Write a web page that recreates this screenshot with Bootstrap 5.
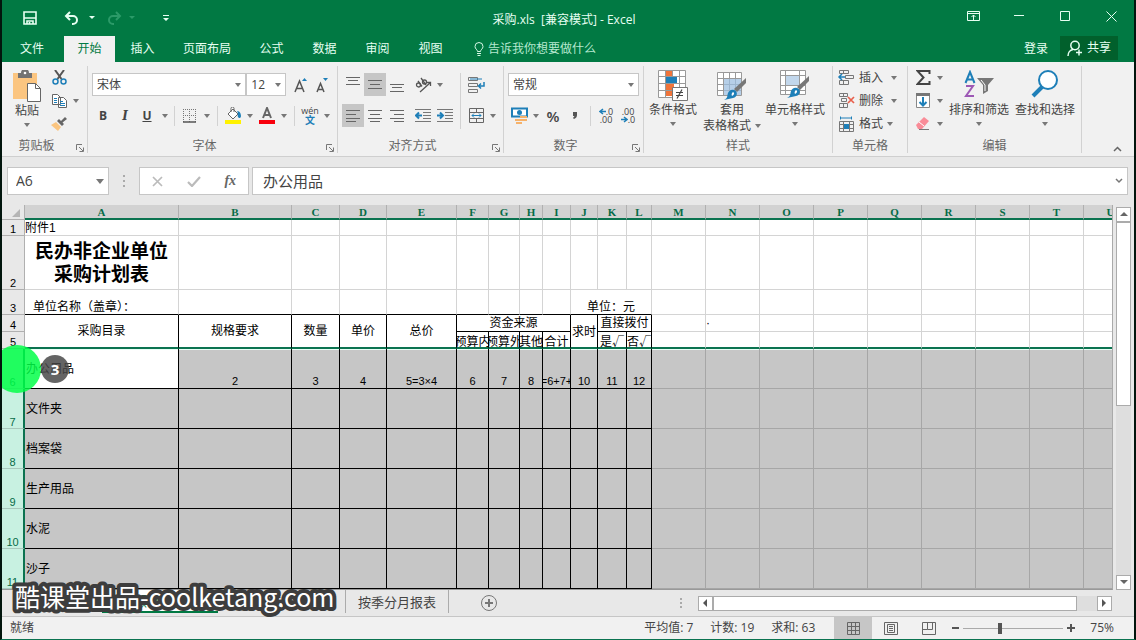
<!DOCTYPE html>
<html lang="zh-CN">
<head>
<meta charset="utf-8">
<meta name="viewport" content="width=device-width, initial-scale=1">
<title>采购.xls [兼容模式] - Excel</title>
<link href="https://cdn.jsdelivr.net/npm/bootstrap@5.3.0/dist/css/bootstrap.min.css" rel="stylesheet">
<style>
:root{--green:#017943;--edge:#0b7350;--ink:#444}
body{font-family:"Open Sans","Noto Sans CJK SC",sans-serif;font-size:12px;line-height:16px;color:var(--ink);background:#e8e8e8}
.app{border-left:2px solid #02150d;border-right:2px solid #02150d;border-bottom:1px solid var(--edge)}
button,input,select{font:inherit;color:inherit}
button{background:none;border:0;padding:0;line-height:16px;white-space:nowrap}
svg{display:block;flex:none}
/* title bar and ribbon tabs */
.topbar{background:var(--green);color:#e6fff2}
.titlerow{height:36px}
.winbtn{width:46px;height:36px}
.qa{width:24px;height:24px}
.tabrow{height:26px;gap:2px}
.rtab{height:26px;min-width:51px;padding:0 13px;color:#e6fff2;text-decoration:none}
.rtab.file{min-width:60px;}
.rtab.on{background:#f1f1f1;color:var(--green)}
.share{height:24px;width:58px;background:#01602c}
/* ribbon */
.ribbon{background:#f1f1f1;border-bottom:1px solid #cfcfcf;height:95px;padding:4px 0}
.grp{border-right:1px solid #d2d2d2;height:87px}
.grp-body{height:72px}
.grp-name{height:15px;color:#666}
.launch{right:3px;bottom:1px}
.tool{width:22px;height:23px}
.tool.on{background:#c6c6c6}
.drop{width:12px;height:20px}
.caret{width:0;height:0;border:3px solid transparent;border-top:4px solid #777;border-bottom:0}
.vsep{width:1px;height:20px;background:#d2d2d2}
.combo{height:23px;border:1px solid #c6c6c6;border-radius:0;padding:0 4px;appearance:none;background:#fff url("data:image/svg+xml,%3Csvg xmlns='http://www.w3.org/2000/svg' width='6' height='4'%3E%3Cpath d='M0 0h6L3 4z' fill='%23777'/%3E%3C/svg%3E") no-repeat right 4px center}
.big{height:68px}
.big svg{margin-bottom:1px}
.w58{width:58px}.w66{width:66px}
.gut{padding:7px 4px 0}
/* formula bar */
.fbar{height:48px;padding:0 6px 0 5px}
.fbox{height:28px;border:1px solid #c6c6c6;background:#fff;border-radius:0}
.namebox{width:102px;font-size:14px}
.fdots{margin:0 14px}
.ftools{width:110px;margin-right:3px}
.fx{font-size:15px;padding:0 4px 0 10px}
/* worksheet */
.sheet{background:#fff;border-bottom:1px solid #999;border-right:1px solid #aaa}
.cells{table-layout:fixed;width:1136px;border-collapse:separate;border-spacing:0;font-family:"Liberation Sans","Noto Sans CJK SC",sans-serif;color:#000;line-height:14px}
.cells td,.cells th{padding:0;border:0 solid #d4d4d4;border-right-width:1px;border-bottom-width:1px;overflow:hidden;white-space:nowrap;font-weight:400}
.cells thead th{height:15px;background:#d2d2d2;border-right-color:#b0b0b0;border-bottom:2px solid var(--edge);color:#066b47;font-family:"Liberation Serif",serif;font-weight:700;font-size:11px;line-height:12px;padding-top:1px;text-align:center}
.cells thead th.corner{background:#e8e8e8;border-right-color:#b0b0b0;border-bottom:1px solid #b0b0b0}
.cells tbody th{background:#e8e8e8;border-color:#b0b0b0;text-align:center;vertical-align:bottom;line-height:12px;font-size:11px}
.cells td{vertical-align:middle}
.cells .k,.sel td:nth-child(-n+13){border-color:#000}
.cells .kb{border-bottom-color:#000}
.cells .edge td,.cells td.edge{border-bottom:2px solid var(--edge)}
.mid{display:flex;justify-content:center;font-family:"Noto Sans CJK SC",sans-serif}
.h15{height:15px;line-height:18px}
.r1{height:16px}.r2{height:54px}.r3{height:25px}.r4{height:17px}.sel,.sel th,.sel td{height:40px}
.sel td{background:#c6c6c6;border-color:#a6a6a6}
.sel td.num{vertical-align:bottom;font-size:11px}
.cells .sel th{background:#c8f1e1;color:#066b47;border-right:2px solid var(--edge);border-bottom-color:#a9c9bd}
.sel td:nth-child(2){padding-left:1px}
.sel td.live{background:#fff}
.sel.top td{box-shadow:inset 0 1px #e8fff6}
.cells td.heading{font-size:19px;line-height:23px;font-weight:700;text-align:center}
.vscroll{width:21px;padding:2px 3px 0 3px}
.sbtn{width:15px;height:15px;border:1px solid #ababab;background:#fff}
.thumb{border:1px solid #ababab;background:#fff}
.grow-a{flex:183 0 0}.grow-b{flex:170 0 0;background:#dedede}
/* sheet tabs and status bar */
.tabsbar{height:27px;border-bottom:1px solid #c6c6c6}
.stab{height:23px;color:var(--ink);text-decoration:none;font-size:13px;padding:0 12px;border-right:1px solid #ababab}
.stab.on{background:#fff;color:var(--green);border-right:0;border-bottom:2px solid var(--green);width:116px}
.stab.wide{width:128px}
.hscroll{width:414px;margin-right:22px}
.status{height:22px;background:#f1f1f1}
.sums{gap:17px;margin-right:19px}
.view{width:38px;height:22px}
.view.on{background:#c6c6c6}
.zoomer{width:100px;height:16px;appearance:none;background:linear-gradient(#aaa,#aaa) center/100% 1px no-repeat}
.zoomer::-webkit-slider-thumb{appearance:none;width:4px;height:11px;background:#555}
.pct{margin:0 20px 0 11px}
/* overlays */
.touch{width:48px;height:48px;left:-9px;top:140px;background:rgba(0,255,70,.84)}
.bubble{width:28px;height:28px;left:39px;top:150px;background:rgba(70,70,70,.84);color:#fff;font-size:15px}
.wm{left:0;bottom:20px}
.wm text{font-family:"Noto Sans CJK SC",sans-serif;font-size:25px;fill:#fff;stroke:#3d3d3d;stroke-width:8px;paint-order:stroke;stroke-linejoin:round}
</style>
</head>
<body>
<div class="app position-relative vh-100 d-flex flex-column overflow-hidden">

<header class="topbar">
  <div class="titlerow d-flex align-items-center">
    <div class="d-flex align-items-center flex-fill" style="flex-basis:0">
      <button class="qa d-flex align-items-center justify-content-center ms-3" aria-label="保存"><svg width="14" height="14" viewBox="0 0 14 14" fill="none" stroke="#e6fff2" stroke-width="1.6"><path d="M1 1h12v12H1zM1 7h12M4 13v-3h6v3"/><path d="M6.500 11v2"/></svg></button>
      <button class="qa d-flex align-items-center justify-content-center ms-3 ps-1" aria-label="撤消"><svg width="16" height="14" viewBox="0 0 16 14" fill="none" stroke="#e6fff2" stroke-width="2"><path d="M6 1L2 5l4 4M2 5h7a4 4 0 0 1 0 8H8"/></svg></button>
      <button class="drop d-flex align-items-center justify-content-center ms-1" aria-label="撤消列表"><svg width="6" height="4"><path d="M0 0h6L3 3z" fill="#e6fff2"/></svg></button>
      <button class="qa d-flex align-items-center justify-content-center ms-1" aria-label="恢复"><svg width="16" height="14" viewBox="0 0 16 14" fill="none" stroke="#2b9a68" stroke-width="2"><path d="M10 1l4 4-4 4M14 5H7a4 4 0 0 0 0 8h1"/></svg></button>
      <button class="drop d-flex align-items-center justify-content-center" aria-label="恢复列表"><svg width="6" height="4"><path d="M0 0h6L3 3z" fill="#2b9a68"/></svg></button>
      <button class="qa d-flex align-items-center justify-content-center ms-3" aria-label="自定义快速访问工具栏"><svg width="6" height="7"><path d="M0 0h6v1H0zM0 3h6L3 6z" fill="#e6fff2"/></svg></button>
    </div>
    <div class="pt-1">采购.xls &nbsp;[兼容模式] - Excel</div>
    <div class="d-flex justify-content-end flex-fill" style="flex-basis:0">
      <button class="winbtn d-flex align-items-center justify-content-center pb-1" aria-label="功能区显示选项"><svg width="13" height="10" viewBox="0 0 13 10" fill="none" stroke="#e6fff2"><path d="M.5.5h12v9H.5zM.5 2.500h12M6.500 9V4M4.500 6l2-2 2 2"/></svg></button>
      <button class="winbtn d-flex align-items-center justify-content-center pb-1" aria-label="最小化"><svg width="10" height="2"><path d="M0 .5h10" stroke="#e6fff2"/></svg></button>
      <button class="winbtn d-flex align-items-center justify-content-center pb-1" aria-label="最大化"><svg width="10" height="10"><path d="M.5.5h9v9h-9z" fill="none" stroke="#e6fff2"/></svg></button>
      <button class="winbtn d-flex align-items-center justify-content-center pb-1" aria-label="关闭"><svg width="11" height="11"><path d="M.5.5l10 10M10.500.5l-10 10" stroke="#e6fff2"/></svg></button>
    </div>
  </div>
  <nav class="tabrow d-flex">
    <a href="#" class="rtab file d-flex align-items-center justify-content-center">文件</a>
    <a href="#" class="rtab on d-flex align-items-center justify-content-center">开始</a>
    <a href="#" class="rtab d-flex align-items-center justify-content-center">插入</a>
    <a href="#" class="rtab d-flex align-items-center justify-content-center">页面布局</a>
    <a href="#" class="rtab d-flex align-items-center justify-content-center">公式</a>
    <a href="#" class="rtab d-flex align-items-center justify-content-center">数据</a>
    <a href="#" class="rtab d-flex align-items-center justify-content-center">审阅</a>
    <a href="#" class="rtab d-flex align-items-center justify-content-center">视图</a>
    <button class="d-flex align-items-center gap-1 ms-3" style="color:#b5e8cf"><svg width="10" height="14" viewBox="0 0 10 14" fill="none" stroke="#d6f8e6"><path d="M3.500 9.500C3.500 7.500 1 7 1 4.500a4 4 0 0 1 8 0c0 2.500-2.500 3-2.500 5zM3 11.500h4M3.500 13.500h3"/></svg><span>告诉我你想要做什么</span></button>
    <div class="ms-auto d-flex me-3">
      <button class="me-2 pe-1">登录</button>
      <button class="share d-flex align-items-center justify-content-center gap-1"><svg width="16" height="17" viewBox="0 0 16 17" fill="none" stroke="#e6fff2" stroke-width="1.500"><circle cx="8" cy="5.500" r="4.200"/><path d="M1 16c0-3 2-6 5-6.500M9 12.500h6M12 9.500v6"/></svg><span>共享</span></button>
    </div>
  </nav>
</header>

<div class="ribbon d-flex">
  <section class="grp position-relative flex-shrink-0" style="width:86px">
    <div class="grp-body d-flex ps-1">
      <button class="big mt-1 d-flex flex-column align-items-center" style="width:42px"><svg width="30" height="32" viewBox="0 0 30 32"><path d="M1 3h24v26H1z" fill="#fbc580"/><path d="M6 3h3a4 4 0 0 1 8 0h3v5H6z" fill="#737373"/><circle cx="13" cy="3" r="1.300" fill="#fff"/><path d="M15.500 13.500h8l5 5v13h-13z" fill="#fff" stroke="#666"/><path d="M23.500 13.500v5h5" fill="none" stroke="#666"/></svg><span>粘贴</span><i class="caret mt-1"></i></button>
      <div class="d-flex flex-column">
        <button class="tool d-flex align-items-center justify-content-center" aria-label="剪切"><svg width="15" height="15" viewBox="0 0 15 15" fill="none"><path d="M3 0l6.500 9M12 0L5.500 9" stroke="#555" stroke-width="2"/><circle cx="3.500" cy="11.500" r="2.500" stroke="#1e7fb8" stroke-width="1.500"/><circle cx="11.500" cy="11.500" r="2.500" stroke="#1e7fb8" stroke-width="1.500"/></svg></button>
        <div class="d-flex align-items-center"><button class="tool d-flex align-items-center justify-content-center" aria-label="复制"><svg width="15" height="14" viewBox="0 0 15 14"><path d="M.5.5h5l3 3v7h-8zM6.500 3.500h5l3 3v7h-8z" fill="#fff" stroke="#666"/><path d="M2 4.500h3M2 6.500h3M2 8.500h3M8 7.500h3M8 9.500h5M8 11.500h5" stroke="#1e7fb8"/></svg></button><button class="drop d-flex align-items-center justify-content-center" aria-label="复制选项"><i class="caret"></i></button></div>
        <button class="tool d-flex align-items-center justify-content-center" aria-label="格式刷"><svg width="16" height="14" viewBox="0 0 16 14"><path d="M0 8l5-3 5 5-3 4z" fill="#fbc580"/><path d="M6 4l5 5 2-2-1.500-1.500L16 2l-2-2-4 4-2-2z" fill="#666"/></svg></button>
      </div>
    </div>
    <div class="grp-name text-center pe-3">剪贴板</div>
    <button class="launch position-absolute" aria-label="剪贴板设置"><svg width="8" height="8"><path d="M.5 6V.5H6M3 3l4 4M7.500 3.500v4h-4" fill="none" stroke="#777"/></svg></button>
  </section>

  <section class="grp position-relative flex-shrink-0" style="width:250px">
    <div class="grp-body gut">
      <div class="d-flex align-items-center mb-2">
        <select class="combo" style="width:157px" aria-label="字体"><option>宋体</option></select>
        <select class="combo" style="width:40px" aria-label="字号"><option>12</option></select>
        <button class="tool d-flex align-items-center justify-content-center ms-1" aria-label="增大字号"><svg width="14" height="16" viewBox="0 0 14 16"><path d="M1 15L5.500 4 10 15M2.500 11.500h6" fill="none" stroke="#555" stroke-width="1.500"/><path d="M8 4l2.500-3L13 4z" fill="#1e7fb8"/></svg></button>
        <button class="tool d-flex align-items-center justify-content-center" aria-label="减小字号"><svg width="14" height="16" viewBox="0 0 14 16"><path d="M2 15L5.500 6.500 9 15M3 12.500h5" fill="none" stroke="#555" stroke-width="1.500"/><path d="M8 1h5L10.500 4z" fill="#1e7fb8"/></svg></button>
      </div>
      <div class="d-flex align-items-center">
        <button class="tool fw-bold">B</button><button class="tool fst-italic fw-bold" style="font-family:'DejaVu Serif',serif">I</button><button class="tool fw-bold text-decoration-underline">U</button><button class="drop d-flex align-items-center" aria-label="下划线选项"><i class="caret ms-1"></i></button>
        <i class="vsep mx-1"></i>
        <button class="tool d-flex align-items-center justify-content-center" aria-label="边框"><svg width="14" height="14" fill="none" stroke="#777"><path d="M.5 0v13M6.500 0v13M12.500 0v13M0 .5h13M0 6.500h13" stroke-dasharray="1 1"/><path d="M0 13h13" stroke="#555" stroke-width="1.500"/></svg></button><button class="drop d-flex align-items-center justify-content-center" aria-label="边框选项"><i class="caret"></i></button>
        <i class="vsep mx-1"></i>
        <button class="tool d-flex align-items-center justify-content-center" aria-label="填充颜色"><svg width="17" height="17" viewBox="0 0 17 17"><path d="M0 13h16v4H0z" fill="#fff200"/><path d="M3 7l5-5 5 5-5 5zM6 5V1.500a1.500 1.500 0 0 1 3 0V5" fill="#fff" stroke="#666"/><path d="M12 4c3 0 4 3 4 5s-2 3-3 1 1-3-1-6z" fill="#1e7fb8"/></svg></button><button class="drop d-flex align-items-center justify-content-center" aria-label="填充颜色选项"><i class="caret"></i></button>
        <button class="tool d-flex align-items-center justify-content-center" aria-label="字体颜色"><svg width="16" height="17" viewBox="0 0 16 17"><path d="M0 13h16v4H0z" fill="#f8000c"/><path d="M4 11L8 1l4 10M5.500 8h5" fill="none" stroke="#666" stroke-width="2"/></svg></button><button class="drop d-flex align-items-center justify-content-center" aria-label="字体颜色选项"><i class="caret"></i></button>
        <i class="vsep mx-1"></i>
        <button class="tool d-flex flex-column align-items-center justify-content-center" aria-label="拼音指南"><span style="font-size:9px;line-height:8px">wén</span><span style="font-size:10px;line-height:10px;color:#1e7fb8" class="fw-bold">文</span></button><button class="drop d-flex align-items-center justify-content-center" aria-label="拼音选项"><i class="caret"></i></button>
      </div>
    </div>
    <div class="grp-name text-center pe-3">字体</div>
    <button class="launch position-absolute" aria-label="字体设置"><svg width="8" height="8"><path d="M.5 6V.5H6M3 3l4 4M7.500 3.500v4h-4" fill="none" stroke="#777"/></svg></button>
  </section>

  <section class="grp position-relative flex-shrink-0" style="width:166px">
    <div class="grp-body gut d-flex">
      <div>
        <div class="d-flex align-items-center mb-2">
          <button class="tool d-flex justify-content-center pt-1" aria-label="顶端对齐"><svg width="14" height="8" stroke="#666"><path d="M0 .5h14M2 3.500h10M0 7.500h14"/></svg></button>
          <button class="tool on d-flex align-items-center justify-content-center" aria-label="垂直居中"><svg width="14" height="9" stroke="#666"><path d="M0 .5h14M2 4.500h10M0 8.500h14"/></svg></button>
          <button class="tool d-flex align-items-end justify-content-center pb-1" aria-label="底端对齐"><svg width="14" height="8" stroke="#666"><path d="M0 .5h14M2 3.500h10M0 7.500h14"/></svg></button>
          <button class="tool d-flex align-items-center justify-content-center ms-1" aria-label="方向"><svg width="17" height="16" viewBox="0 0 17 16" fill="none" stroke="#555" stroke-width="1.300"><circle cx="3.500" cy="8" r="2"/><path d="M3 4l4 5.500M6 1l5 7"/><circle cx="9.500" cy="5" r="2"/><path d="M5 15L15.500 5.500M12 5.500h3.500V9"/></svg></button><button class="drop d-flex align-items-center justify-content-center" aria-label="方向选项"><i class="caret"></i></button>
        </div>
        <div class="d-flex align-items-center">
          <button class="tool on d-flex align-items-center justify-content-center" aria-label="左对齐"><svg width="14" height="12" stroke="#666"><path d="M0 .5h14M0 4.500h10M0 8.500h14M0 11.500h10"/></svg></button>
          <button class="tool d-flex align-items-center justify-content-center" aria-label="居中"><svg width="14" height="12" stroke="#666"><path d="M0 .5h14M2 4.500h10M0 8.500h14M2 11.500h10"/></svg></button>
          <button class="tool d-flex align-items-center justify-content-center" aria-label="右对齐"><svg width="14" height="12" stroke="#666"><path d="M0 .5h14M4 4.500h10M0 8.500h14M4 11.500h10"/></svg></button>
          <button class="tool d-flex align-items-center justify-content-center ms-1" aria-label="减少缩进"><svg width="16" height="13" fill="none"><path d="M0 .5h16M8 3.500h8M8 6.500h8M8 9.500h8M0 12.500h16" stroke="#777"/><path d="M7 6.500H1M4 3.500l-3 3 3 3" stroke="#1e7fb8" stroke-width="2"/></svg></button>
          <button class="tool d-flex align-items-center justify-content-center" aria-label="增加缩进"><svg width="16" height="13" fill="none"><path d="M0 .5h16M8 3.500h8M8 6.500h8M8 9.500h8M0 12.500h16" stroke="#777"/><path d="M0 6.500h6M3 3.500l3 3-3 3" stroke="#1e7fb8" stroke-width="2"/></svg></button>
        </div>
      </div>
      <i class="vsep mx-1" style="height:56px"></i>
      <div>
        <button class="tool d-flex align-items-center justify-content-center mb-2" aria-label="自动换行"><svg width="17" height="16" viewBox="0 0 17 16" fill="none"><path d="M.5.5h9v3h-9zM.5 6.500h9v3h-9zM.5 12.500h9v3h-9z" stroke="#777"/><path d="M2 2h12" stroke="#1e7fb8"/><path d="M16 5v4h-5M13 6.500L10.500 9l2.500 2.500" stroke="#1e7fb8" stroke-width="1.500"/></svg></button>
        <div class="d-flex align-items-center"><button class="tool d-flex align-items-center justify-content-center" aria-label="合并后居中"><svg width="15" height="15" fill="none"><path d="M.5.5h14v14H.5zM.5 4.500h14M.5 10.500h14M7.500.5v4M7.500 10.500v4" stroke="#666"/><path d="M3 7.500h9M5 5.500l-2 2 2 2M10 5.500l2 2-2 2" stroke="#1e7fb8"/></svg></button><button class="drop d-flex align-items-center justify-content-center" aria-label="合并选项"><i class="caret"></i></button></div>
      </div>
    </div>
    <div class="grp-name text-center pe-3">对齐方式</div>
    <button class="launch position-absolute" aria-label="对齐设置"><svg width="8" height="8"><path d="M.5 6V.5H6M3 3l4 4M7.500 3.500v4h-4" fill="none" stroke="#777"/></svg></button>
  </section>

  <section class="grp position-relative flex-shrink-0" style="width:140px">
    <div class="grp-body gut">
      <select class="combo d-block mb-2" style="width:131px" aria-label="数字格式"><option>常规</option></select>
      <div class="d-flex align-items-center">
        <button class="tool d-flex align-items-center justify-content-center" aria-label="会计数字格式"><svg width="17" height="17" viewBox="0 0 17 17"><path d="M1 1.500h15v8H1z" fill="#fff" stroke="#1e7fb8" stroke-width="2"/><circle cx="8.500" cy="5.500" r="2.500" fill="#1e7fb8"/><path d="M9 9h7v2H9zM9 12h7v2H9zM4 12h6v2H4zM5 15h6v2H5z" fill="#f6b26b"/></svg></button><button class="drop d-flex align-items-center justify-content-center" aria-label="会计格式选项"><i class="caret"></i></button>
        <button class="tool" aria-label="百分比样式" style="font-size:15px;font-weight:600;line-height:20px">%</button>
        <button class="tool d-flex align-items-center justify-content-center" aria-label="千位分隔样式"><svg width="6" height="9"><path d="M1 1h4v3c0 2-1 3-3 4l-1-1 1.500-2H1z" fill="#555"/></svg></button>
        <i class="vsep mx-1"></i>
        <button class="tool d-flex flex-column align-items-center justify-content-center" aria-label="增加小数位数" style="font-size:9px"><span class="d-flex align-items-center" style="line-height:8px"><svg width="7" height="7" fill="none" stroke="#1e7fb8" stroke-width="1.500"><path d="M7 3.500H1M4 1L1 3.500 4 6"/></svg>.0</span><span style="line-height:8px">.00</span></button>
        <button class="tool d-flex flex-column align-items-center justify-content-center" aria-label="减少小数位数" style="font-size:9px"><span style="line-height:8px">.00</span><span class="d-flex align-items-center" style="line-height:8px"><svg width="7" height="7" fill="none" stroke="#1e7fb8" stroke-width="1.500"><path d="M0 3.500h6M3 1l3 2.500L3 6"/></svg>.0</span></button>
      </div>
    </div>
    <div class="grp-name text-center pe-3">数字</div>
    <button class="launch position-absolute" aria-label="数字设置"><svg width="8" height="8"><path d="M.5 6V.5H6M3 3l4 4M7.500 3.500v4h-4" fill="none" stroke="#777"/></svg></button>
  </section>

  <section class="grp flex-shrink-0" style="width:189px">
    <div class="grp-body d-flex pt-1" style="gap:1px">
      <button class="big w58 d-flex flex-column align-items-center"><svg width="30" height="31" viewBox="0 0 30 31"><path d="M.5.5h27v27H.5zM7.500.5v27M14.500.5v27M21.500.5v27M.5 6.500h27M.5 13.500h27M.5 20.500h27" fill="#fff" stroke="#999"/><path d="M8 1h6v5H8zM8 14h8v6H8zM8 21h6v5H8z" fill="#f0743a"/><path d="M8 7h11v6H8z" fill="#1e7fb8"/><path d="M14.500 17.500h15v13h-15z" fill="#fff" stroke="#777"/><path d="M18 22.500h7M18 25.500h7M24 19.500l-5 9" stroke="#444" stroke-width="1.200"/></svg><span>条件格式</span><i class="caret mt-1"></i></button>
      <button class="big w58 d-flex flex-column align-items-center"><svg width="30" height="31" viewBox="0 0 30 31"><path d="M.5 2.500h24v23H.5zM6.500 2.500v23M12.500 2.500v23M18.500 2.500v23M.5 8.500h24M.5 14.500h24M.5 20.500h24" fill="#fff" stroke="#999"/><path d="M7 9h17v16H7z" fill="#9dbfe0" opacity=".75"/><path d="M29 8v5L20 22l-3-3z" fill="#777"/><path d="M17 20c4 1 4 7-1 8-3 1-6 1-9 2 4-2 3-4 4-7 1-2 3-4 6-3z" fill="#1e7fb8"/><path d="M16 22c2 1 1 3-1 4-1-2 0-3 1-4z" fill="#fff"/></svg><span>套用</span><span class="d-flex align-items-center">表格格式<i class="caret ms-1"></i></span></button>
      <button class="big w66 d-flex flex-column align-items-center"><svg width="30" height="31" viewBox="0 0 30 31"><path d="M.5.5h25v24H.5zM5.500.5v24M19.500.5v24M.5 5.500h25M.5 15.500h25M.5 20.500h25" fill="#fff" stroke="#999"/><path d="M6 6h13v9H6z" fill="#c2d7ec"/><path d="M29 6v5L20 20l-3-3z" fill="#777"/><path d="M17 18c4 1 4 7-1 8-3 1-6 1-9 2 4-2 3-4 4-7 1-2 3-4 6-3z" fill="#1e7fb8"/><path d="M16 20c2 1 1 3-1 4-1-2 0-3 1-4z" fill="#fff"/></svg><span>单元格样式</span><i class="caret mt-1"></i></button>
    </div>
    <div class="grp-name text-center">样式</div>
  </section>

  <section class="grp flex-shrink-0" style="width:75px">
    <div class="grp-body ps-1">
      <button class="d-flex align-items-center" style="height:23px"><svg width="18" height="15" viewBox="0 0 18 15" fill="none"><path d="M2.500.5h9v3h-9zM6.500.5v3M2.500 10.500h9v4h-9zM6.500 10.500v4M8.500 5.500h8v3h-8z" stroke="#777"/><path d="M8 7H2M5 4L2 7l3 3" stroke="#1e7fb8" stroke-width="1.500"/></svg><span class="ms-1">插入</span><i class="caret ms-2"></i></button>
      <button class="d-flex align-items-center" style="height:23px"><svg width="18" height="15" viewBox="0 0 18 15" fill="none"><path d="M2.500.5h8v3h-8zM6.500.5v3M2.500 10.500h8v4h-8zM6.500 10.500v4M4.500 5.500h5v3h-5z" stroke="#777"/><path d="M11 4l6 6M17 4l-6 6" stroke="#e8604c" stroke-width="1.700"/></svg><span class="ms-1">删除</span><i class="caret ms-2"></i></button>
      <button class="d-flex align-items-center" style="height:23px"><svg width="18" height="16" viewBox="0 0 18 16" fill="none"><path d="M3.500.5v3M14.500.5v3M4 2h10" stroke="#1e7fb8"/><path d="M2.500 5.500h14v10h-14zM6.500 5.500v10M12.500 5.500v10M2.500 8.500h14M2.500 12.500h14" stroke="#777"/><path d="M7 8h5v5H7z" fill="#1e7fb8"/></svg><span class="ms-1">格式</span><i class="caret ms-1"></i></button>
    </div>
    <div class="grp-name text-center">单元格</div>
  </section>

  <section class="grp flex-shrink-0" style="width:174px">
    <div class="grp-body d-flex ps-1">
      <div>
        <div class="d-flex align-items-center"><button class="tool d-flex align-items-center justify-content-center" aria-label="自动求和"><svg width="15" height="15" viewBox="0 0 15 15" fill="none" stroke="#444" stroke-width="2"><path d="M13.500 4V1H1.500l6 6.500-6 6.500h12v-3"/></svg></button><button class="drop d-flex align-items-center justify-content-center" aria-label="求和选项"><i class="caret"></i></button></div>
        <div class="d-flex align-items-center"><button class="tool d-flex align-items-center justify-content-center" aria-label="填充"><svg width="14" height="15" viewBox="0 0 14 15" fill="none"><path d="M.5.5h13v14H.5z" fill="#fff" stroke="#888"/><path d="M0 0h14v3H0z" fill="#777"/><path d="M7 4v8M3.500 9L7 12.500 10.500 9" stroke="#1e7fb8" stroke-width="2"/></svg></button><button class="drop d-flex align-items-center justify-content-center" aria-label="填充选项"><i class="caret"></i></button></div>
        <div class="d-flex align-items-center"><button class="tool d-flex align-items-center justify-content-center" aria-label="清除"><svg width="14" height="13" viewBox="0 0 14 13"><path d="M0 8l8-8 5 4-7 8H2z" fill="#f98c98"/><path d="M3 5l5 4" stroke="#fff"/><path d="M3 12.500h10" stroke="#777"/></svg></button><button class="drop d-flex align-items-center justify-content-center" aria-label="清除选项"><i class="caret"></i></button></div>
      </div>
      <button class="big w66 mt-1 d-flex flex-column align-items-center"><svg width="30" height="31" viewBox="0 0 30 31" fill="none"><path d="M1.500 13L6 2l4.500 11M3 9.500h6" stroke="#1e7fb8" stroke-width="2"/><path d="M2 16h7L2 26h8" stroke="#9d58b5" stroke-width="2"/><path d="M13 8h17l-6 7v6l-5 3v-9z" fill="#777"/><path d="M17 10l4 5v6" stroke="#fff"/></svg><span>排序和筛选</span><i class="caret mt-1"></i></button>
      <button class="big w66 mt-1 d-flex flex-column align-items-center"><svg width="28" height="31" viewBox="0 0 28 31" fill="none" stroke="#1e7fb8"><circle cx="17" cy="10" r="9" fill="#fff" stroke-width="2"/><path d="M11 17L2 26" stroke-width="4"/></svg><span>查找和选择</span><i class="caret mt-1"></i></button>
    </div>
    <div class="grp-name text-center">编辑</div>
  </section>
  <button class="ms-auto align-self-end me-2 pe-1" aria-label="折叠功能区"><svg width="9" height="6"><path d="M1 5l3.500-3.500L8 5" fill="none" stroke="#666" stroke-width="1.500"/></svg></button>
</div>

<div class="fbar d-flex align-items-center">
  <div class="fbox namebox d-flex align-items-center px-1"><input class="border-0 bg-transparent w-100 p-0 ps-1" value="A6" aria-label="名称框"><svg width="8" height="5"><path d="M0 0h8L4 5z" fill="#777"/></svg></div>
  <svg class="fdots" width="2" height="12"><path d="M0 0h2v2H0zM0 5h2v2H0zM0 10h2v2H0z" fill="#aaa"/></svg>
  <div class="fbox ftools d-flex align-items-center justify-content-around">
    <button aria-label="取消"><svg width="11" height="11"><path d="M1 1l9 9M10 1l-9 9" stroke="#bbb" stroke-width="1.700"/></svg></button>
    <button aria-label="输入"><svg width="14" height="11"><path d="M1 6l4 4 8-9" fill="none" stroke="#bbb" stroke-width="2.200"/></svg></button>
    <button aria-label="插入函数" class="fst-italic fw-bold" style="font-family:'Liberation Serif',serif;font-size:14px;color:#666">fx</button>
  </div>
  <div class="fbox fx flex-fill d-flex align-items-center"><input class="border-0 bg-transparent flex-fill p-0" value="办公用品" aria-label="编辑栏"><svg width="8" height="6"><path d="M1 1l3 3 3-3" fill="none" stroke="#777" stroke-width="1.500"/></svg></div>
</div>

<main class="flex-fill d-flex position-relative" style="min-height:0">
  <div class="sheet flex-fill overflow-hidden" style="min-width:0">
  <table class="cells">
    <colgroup><col style="width:23px"><col style="width:154px"><col style="width:113px"><col style="width:48px"><col style="width:47px"><col style="width:70px"><col style="width:32px"><col style="width:31px"><col style="width:23px"><col style="width:28px"><col style="width:27px"><col style="width:29px"><col style="width:25px"><col span="8" style="width:54px"><col style="width:54px"></colgroup>
    <thead><tr><th class="corner" aria-label="全选"><svg class="ms-auto me-1" width="8" height="8"><path d="M8 0v8H0z" fill="#b5b5b5"/></svg></th><th>A</th><th>B</th><th>C</th><th>D</th><th>E</th><th>F</th><th>G</th><th>H</th><th>I</th><th>J</th><th>K</th><th>L</th><th>M</th><th>N</th><th>O</th><th>P</th><th>Q</th><th>R</th><th>S</th><th>T</th><th>U</th></tr></thead>
    <tbody>
    <tr class="r1"><th>1</th><td>附件1</td><td></td><td></td><td></td><td></td><td></td><td></td><td></td><td></td><td></td><td></td><td></td><td></td><td></td><td></td><td></td><td></td><td></td><td></td><td></td><td></td></tr>
    <tr class="r2"><th>2</th><td class="heading">民办非企业单位<br>采购计划表</td><td></td><td></td><td></td><td></td><td></td><td></td><td></td><td></td><td></td><td></td><td></td><td></td><td></td><td></td><td></td><td></td><td></td><td></td><td></td><td></td></tr>
    <tr class="r3"><th>3</th><td class="kb align-bottom ps-2">单位名称（盖章）：</td><td class="kb"></td><td class="kb"></td><td class="kb"></td><td class="kb"></td><td class="kb"></td><td class="kb"></td><td class="kb"></td><td class="kb"></td><td class="kb align-bottom text-center" colspan="3">单位：元</td><td></td><td></td><td></td><td></td><td></td><td></td><td></td><td></td><td></td></tr>
    <tr class="r4"><th>4</th><td rowspan="2" class="k edge text-center">采购目录</td><td rowspan="2" class="k edge text-center">规格要求</td><td rowspan="2" class="k edge text-center">数量</td><td rowspan="2" class="k edge text-center">单价</td><td rowspan="2" class="k edge text-center">总价</td><td colspan="4" class="k text-center">资金来源</td><td rowspan="2" class="k edge"><div class="mid">求时</div></td><td colspan="2" class="k text-center">直接拨付</td><td></td><td>·</td><td></td><td></td><td></td><td></td><td></td><td></td><td></td></tr>
    <tr class="r4 edge"><th>5</th><td class="k"><div class="mid h15">预算内</div></td><td class="k"><div class="mid h15">预算外</div></td><td class="k"><div class="mid h15">其他</div></td><td class="k"><div class="mid h15">合计</div></td><td class="k"><div class="mid h15">是√</div></td><td class="k"><div class="mid h15">否√</div></td><td></td><td></td><td></td><td></td><td></td><td></td><td></td><td></td><td></td></tr>
    <tr class="sel top"><th>6</th><td class="live">办公用品</td><td class="num text-center">2</td><td class="num text-center">3</td><td class="num text-center">4</td><td class="num text-center">5=3×4</td><td class="num text-center">6</td><td class="num text-center">7</td><td class="num text-center">8</td><td class="num"><div class="mid" style="font-family:inherit">9=6+7+8</div></td><td class="num text-center">10</td><td class="num text-center">11</td><td class="num text-center">12</td><td></td><td></td><td></td><td></td><td></td><td></td><td></td><td></td><td></td></tr>
    <tr class="sel"><th>7</th><td>文件夹</td><td></td><td></td><td></td><td></td><td></td><td></td><td></td><td></td><td></td><td></td><td></td><td></td><td></td><td></td><td></td><td></td><td></td><td></td><td></td><td></td></tr>
    <tr class="sel"><th>8</th><td>档案袋</td><td></td><td></td><td></td><td></td><td></td><td></td><td></td><td></td><td></td><td></td><td></td><td></td><td></td><td></td><td></td><td></td><td></td><td></td><td></td><td></td></tr>
    <tr class="sel"><th>9</th><td>生产用品</td><td></td><td></td><td></td><td></td><td></td><td></td><td></td><td></td><td></td><td></td><td></td><td></td><td></td><td></td><td></td><td></td><td></td><td></td><td></td><td></td></tr>
    <tr class="sel"><th>10</th><td>水泥</td><td></td><td></td><td></td><td></td><td></td><td></td><td></td><td></td><td></td><td></td><td></td><td></td><td></td><td></td><td></td><td></td><td></td><td></td><td></td><td></td></tr>
    <tr class="sel"><th>11</th><td>沙子</td><td></td><td></td><td></td><td></td><td></td><td></td><td></td><td></td><td></td><td></td><td></td><td></td><td></td><td></td><td></td><td></td><td></td><td></td><td></td><td></td></tr>
    </tbody>
  </table>
  </div>
  <div class="vscroll d-flex flex-column flex-shrink-0">
    <button class="sbtn d-flex align-items-center justify-content-center" aria-label="向上滚动"><svg width="8" height="5"><path d="M0 4h8L4 0z" fill="#666"/></svg></button>
    <div class="thumb grow-a"></div><div class="grow-b"></div>
    <button class="sbtn d-flex align-items-center justify-content-center" aria-label="向下滚动"><svg width="8" height="5"><path d="M0 0h8L4 4z" fill="#666"/></svg></button>
  </div>
  <div class="touch position-absolute rounded-circle"></div>
  <div class="bubble position-absolute rounded-circle d-flex align-items-center justify-content-center fw-bold">3</div>
</main>

<div class="tabsbar d-flex">
  <div class="ps-5 pe-3" style="width:100px"><span class="ps-4">…</span></div>
  <a href="#" class="stab on d-flex align-items-center justify-content-center">采购计划表</a>
  <a href="#" class="stab wide d-flex align-items-center justify-content-end">年度分月报表</a>
  <a href="#" class="stab d-flex align-items-center">按季分月报表</a>
  <button class="ms-4 ps-2" aria-label="新工作表"><svg width="16" height="16" fill="none" stroke="#777"><circle cx="8" cy="8" r="7.500"/><path d="M8 4v8M4 8h8" stroke-width="2"/></svg></button>
  <div class="ms-auto d-flex align-items-center">
    <svg class="me-3" width="2" height="11"><path d="M0 0h2v2H0zM0 4h2v2H0zM0 8h2v2H0z" fill="#aaa"/></svg>
    <div class="hscroll d-flex">
      <button class="sbtn d-flex align-items-center justify-content-center" aria-label="向左滚动"><svg width="5" height="8"><path d="M4 0v8L0 4z" fill="#555"/></svg></button>
      <div class="thumb" style="flex:366 0 0"></div><div style="flex:20 0 0;background:#dedede"></div>
      <button class="sbtn d-flex align-items-center justify-content-center" aria-label="向右滚动"><svg width="5" height="8"><path d="M0 0v8l4-4z" fill="#555"/></svg></button>
    </div>
  </div>
</div>

<footer class="status d-flex align-items-center">
  <span class="ps-2">就绪</span>
  <div class="ms-auto d-flex sums"><span>平均值: 7</span><span>计数: 19</span><span>求和: 63</span></div>
  <button class="view on d-flex align-items-center justify-content-center" aria-label="普通"><svg width="13" height="13" fill="none" stroke="#666"><path d="M.5.5h12v12H.5zM4.500.5v12M8.500.5v12M.5 4.500h12M.5 8.500h12"/></svg></button>
  <button class="view d-flex align-items-center justify-content-center" aria-label="页面布局"><svg width="14" height="13" fill="none" stroke="#666"><path d="M.5.5h13v12H.5zM3.500 2.500h7v8h-7zM5 4.500h4M5 6.500h4M5 8.500h4"/></svg></button>
  <button class="view d-flex align-items-center justify-content-center" aria-label="分页预览"><svg width="14" height="13" fill="none" stroke="#666"><path d="M.5.5h13v12H.5zM5.500.5v7h5v-7M.5 7.500h5"/></svg></button>
  <button aria-label="缩小"><svg class="mx-1" width="7" height="3"><path d="M0 0h7v2H0z" fill="#555"/></svg></button>
  <input type="range" class="zoomer" min="0" max="100" value="36" aria-label="缩放">
  <button aria-label="放大"><svg class="mx-1" width="8" height="8"><path d="M3 0h2v8H3zM0 3h8v2H0z" fill="#555"/></svg></button>
  <span class="pct">75%</span>
</footer>

<svg class="wm position-absolute" width="350" height="44"><text x="13" y="32">酷课堂出品-coolketang.com</text></svg>
</div>
<script src="https://cdn.jsdelivr.net/npm/bootstrap@5.3.0/dist/js/bootstrap.bundle.min.js"></script>
</body>
</html>
